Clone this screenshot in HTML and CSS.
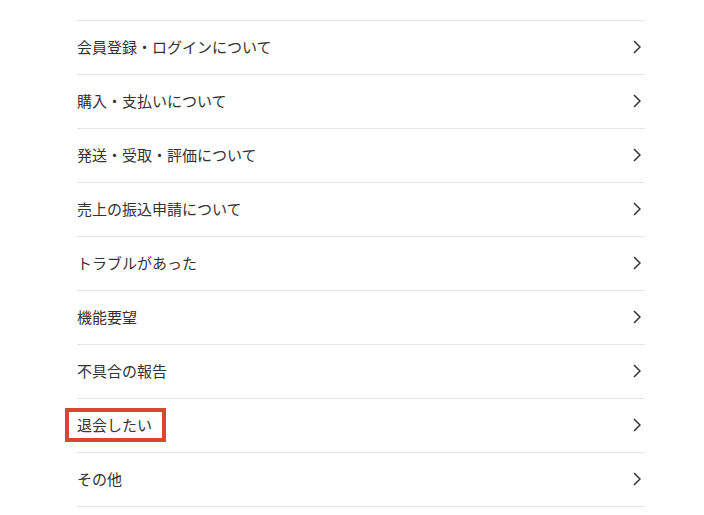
FILE: index.html
```html
<!DOCTYPE html>
<html lang="ja">
<head>
    <meta charset="UTF-8">
    <meta name="viewport" content="width=device-width, initial-scale=1.0">
    <title>お問い合わせ</title>
    <link rel="stylesheet" href="styles.css">
</head>
<body>
    <ul class="menu-list">
        <li><a href="#"><span>会員登録・ログインについて</span><svg class="chevron" viewBox="0 0 8 14"><path d="M1 1l6 6-6 6"/></svg></a></li>
        <li><a href="#"><span>購入・支払いについて</span><svg class="chevron" viewBox="0 0 8 14"><path d="M1 1l6 6-6 6"/></svg></a></li>
        <li><a href="#"><span>発送・受取・評価について</span><svg class="chevron" viewBox="0 0 8 14"><path d="M1 1l6 6-6 6"/></svg></a></li>
        <li><a href="#"><span>売上の振込申請について</span><svg class="chevron" viewBox="0 0 8 14"><path d="M1 1l6 6-6 6"/></svg></a></li>
        <li><a href="#"><span>トラブルがあった</span><svg class="chevron" viewBox="0 0 8 14"><path d="M1 1l6 6-6 6"/></svg></a></li>
        <li><a href="#"><span>機能要望</span><svg class="chevron" viewBox="0 0 8 14"><path d="M1 1l6 6-6 6"/></svg></a></li>
        <li><a href="#"><span>不具合の報告</span><svg class="chevron" viewBox="0 0 8 14"><path d="M1 1l6 6-6 6"/></svg></a></li>
        <li><a href="#"><span class="highlight">退会したい</span><svg class="chevron" viewBox="0 0 8 14"><path d="M1 1l6 6-6 6"/></svg></a></li>
        <li><a href="#"><span>その他</span><svg class="chevron" viewBox="0 0 8 14"><path d="M1 1l6 6-6 6"/></svg></a></li>
    </ul>
</body>
</html>
```

FILE: styles.css
```css
body {
    font-family: "Noto Sans CJK JP", "Noto Sans", sans-serif;
    background-color: #ffffff;
    margin: 0;
    padding: 20px 0 0 77px;
    color: #333;
}

.menu-list {
    list-style: none;
    width: 568px;
    margin: 0;
    padding: 0;
    border-bottom: 1px solid #e5e5e5;
}

.menu-list li {
    border-top: 1px solid #e5e5e5;
}

.menu-list a {
    display: flex;
    align-items: center;
    justify-content: space-between;
    height: 51px;
    padding-bottom: 2px;
    color: #333;
    font-size: 15px;
    text-decoration: none;
}

.highlight {
    border: 4px solid #dc4532;
    padding: 2px 10px 2px 8px;
    margin-left: -12px;
    line-height: 22px;
}

.chevron {
    width: 8px;
    height: 14px;
    margin-right: 4px;
    fill: none;
    stroke: #333;
    stroke-width: 1.5;
}
```
